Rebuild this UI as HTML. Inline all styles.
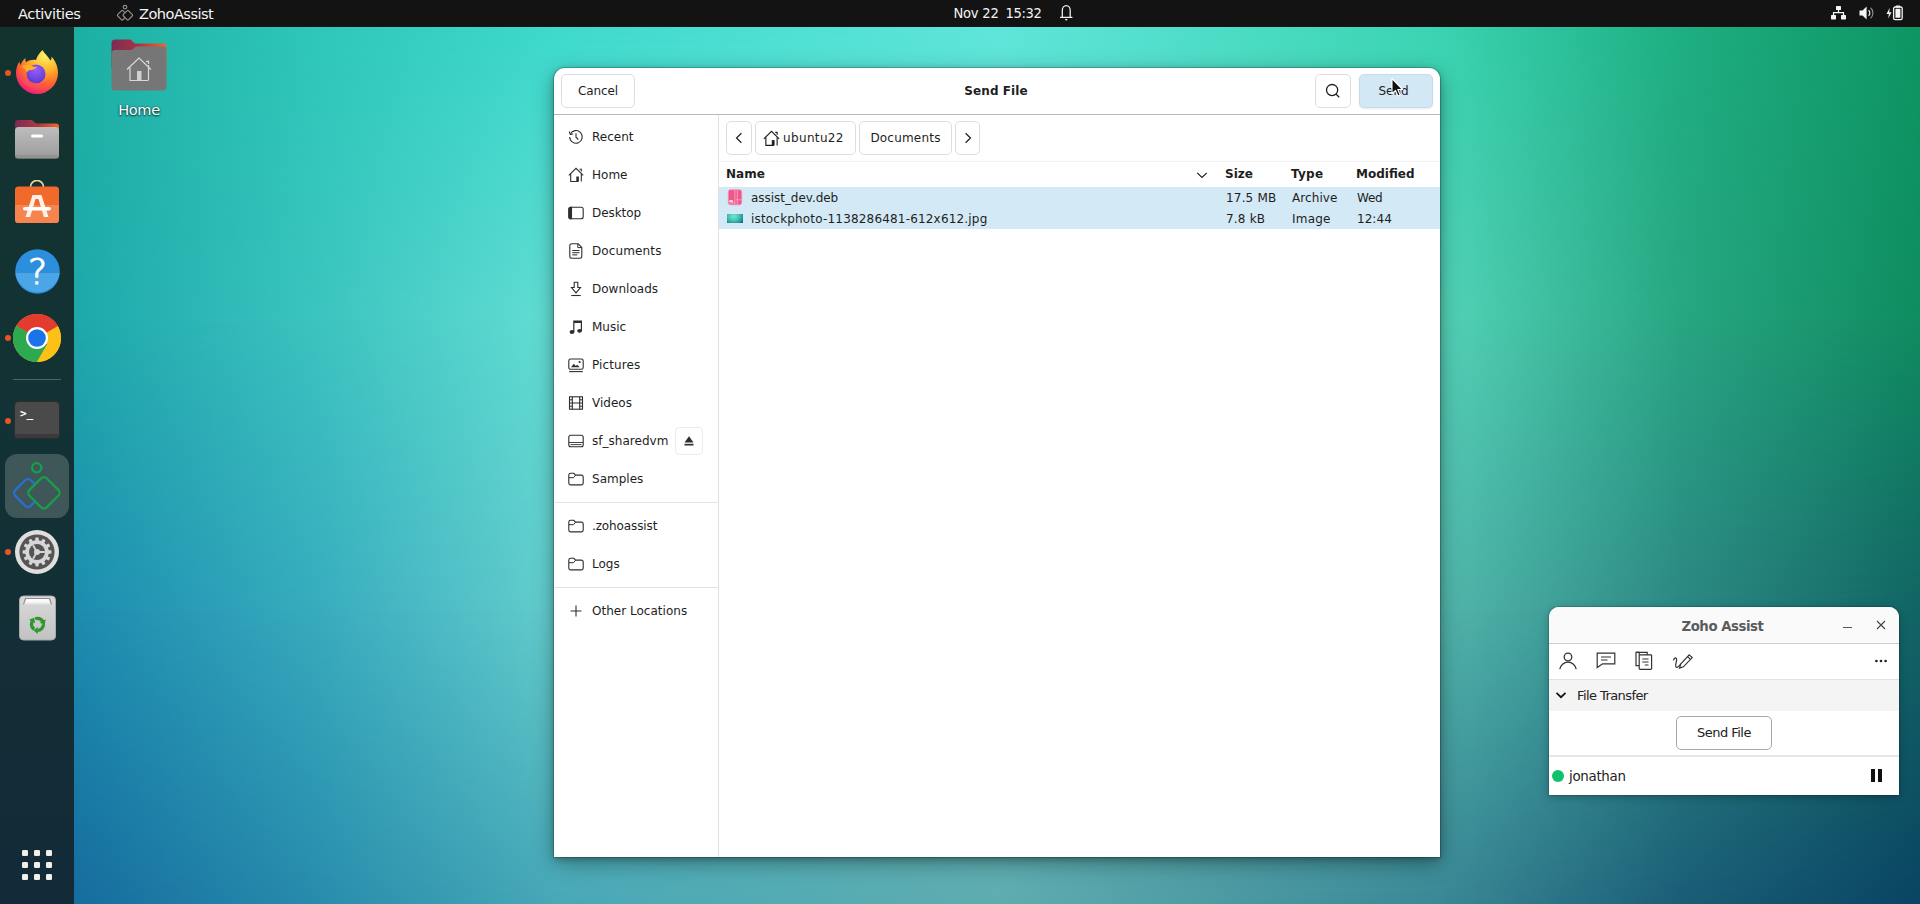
<!DOCTYPE html>
<html lang="en">
<head>
<meta charset="utf-8">
<title>Send File</title>
<style>
*{box-sizing:border-box;margin:0;padding:0}
html,body{width:1920px;height:904px;overflow:hidden;background:#1a9aa5}
body{position:relative;font-family:"DejaVu Sans","Liberation Sans",sans-serif;font-size:12px;color:#1e1e1e;-webkit-font-smoothing:antialiased}
.abs{position:absolute}
/* wallpaper */
#wall{position:absolute;left:0;top:0;width:1920px;height:904px;overflow:hidden}
#wall div{position:absolute;left:0;top:0;width:1920px;height:904px}
/* top bar */
#topbar{position:absolute;left:0;top:0;width:1920px;height:27px;background:#131313;color:#f4f4f4;font-size:14.6px;font-family:"DejaVu Sans","Liberation Sans",sans-serif}
#topbar span{position:absolute;top:0;line-height:27px;white-space:nowrap}
/* dock */
#dock{position:absolute;left:0;top:27px;width:74px;height:877px;background:linear-gradient(180deg,#13332f 0%,#133235 45%,#132a38 100%)}
.dot{position:absolute;width:6px;height:6px;border-radius:50%;background:#e95420}
/* dialog */
#dlg{position:absolute;left:554px;top:68px;width:886px;height:789px;background:#fff;border-radius:11px 11px 0 0;box-shadow:0 0 0 1px rgba(0,0,0,.18),0 6px 22px rgba(0,0,0,.35),0 2px 6px rgba(0,0,0,.25)}
#hdr{position:absolute;left:0;top:0;width:886px;height:47px;border-bottom:1px solid #b9b9b9}
.btn{position:absolute;border:1px solid #dedede;border-radius:5px;background:#fff;text-align:center;white-space:nowrap}
#side{position:absolute;left:0;top:47px;width:165px;height:742px;border-right:1px solid #e0e0e0;background:#fff}
.si{position:absolute;left:38px;height:20px;line-height:20px;white-space:nowrap;letter-spacing:.02px;margin-top:1px}
.ic{position:absolute;left:14px;width:16px;height:16px;margin-top:1px}
.sep{position:absolute;left:0;width:164px;height:1px;background:#e2e2e2}
#main{position:absolute;left:165px;top:47px;width:721px;height:742px}
.row{position:absolute;left:0;width:721px;height:21px;background:#d3e9f5}
.row span{position:absolute;top:1px;line-height:21px;white-space:nowrap}
.ch span{position:absolute;top:0;white-space:nowrap}
.ch{position:absolute;left:0;top:114px;width:721px;height:26px;font-weight:bold}
.ch span{line-height:26px}
/* widget */
#wd{position:absolute;left:1549px;top:607px;width:350px;height:188px;background:#fff;border-radius:10px 10px 0 0;overflow:hidden}
#wdwrap{position:absolute;left:1549px;top:607px;width:350px;height:188px;border-radius:10px 10px 0 0;box-shadow:0 0 0 1px rgba(0,0,0,.12),0 2px 10px rgba(0,0,0,.28)}
</style>
</head>
<body>
<!--WALL0-->
<div id="wall">
<div style="background:linear-gradient(90deg,rgb(28,176,163) 0.00%,rgb(28,176,163) 3.85%,rgb(46,200,186) 16.67%,rgb(62,218,205) 29.17%,rgb(95,230,218) 52.08%,rgb(58,212,178) 75.00%,rgb(30,175,130) 87.50%,rgb(14,150,100) 100.00%);"></div>
<div style="background:linear-gradient(90deg,rgb(30,168,170) 0.00%,rgb(30,168,170) 3.85%,rgb(60,196,192) 16.67%,rgb(100,222,212) 29.17%,rgb(100,220,205) 52.08%,rgb(84,210,184) 75.00%,rgb(40,166,130) 87.50%,rgb(15,140,96) 100.00%);-webkit-mask-image:linear-gradient(180deg,rgba(0,0,0,0) 27px,#000 320px);mask-image:linear-gradient(180deg,rgba(0,0,0,0) 27px,#000 320px);"></div>
<div style="background:linear-gradient(90deg,rgb(28,140,175) 0.00%,rgb(28,140,175) 3.85%,rgb(56,172,190) 16.67%,rgb(100,205,205) 29.17%,rgb(95,195,195) 52.08%,rgb(82,182,172) 75.00%,rgb(44,136,132) 87.50%,rgb(18,100,100) 100.00%);-webkit-mask-image:linear-gradient(180deg,rgba(0,0,0,0) 320px,#000 610px);mask-image:linear-gradient(180deg,rgba(0,0,0,0) 320px,#000 610px);"></div>
<div style="background:linear-gradient(90deg,rgb(22,108,158) 0.00%,rgb(22,108,158) 3.85%,rgb(40,140,172) 16.67%,rgb(72,168,182) 29.17%,rgb(95,172,175) 52.08%,rgb(58,135,150) 75.00%,rgb(26,93,118) 87.50%,rgb(10,68,98) 100.00%);-webkit-mask-image:linear-gradient(180deg,rgba(0,0,0,0) 610px,#000 904px);mask-image:linear-gradient(180deg,rgba(0,0,0,0) 610px,#000 904px);"></div>
</div>
<!--WALL1-->
<div id="topbar">
<span style="left:18px;letter-spacing:-.42px">Activities</span>
<svg class="abs" style="left:116px;top:4px" width="18" height="18" viewBox="0 0 18 18" fill="none" stroke="#8e8e8e" stroke-width="1.2"><circle cx="9" cy="3.100" r="1.800"/><rect x="2.500" y="7.500" width="7.400" height="7.400" rx="1.200" transform="rotate(45 6.200 11.200)"/><rect x="8.100" y="7.500" width="7.400" height="7.400" rx="1.200" transform="rotate(45 11.800 11.200)" fill="#131313"/></svg>
<span style="left:139px;letter-spacing:-.55px">ZohoAssist</span>
<span style="left:953.500px;top:-1px;font-family:'DejaVu Sans Condensed','DejaVu Sans','Liberation Sans',sans-serif;letter-spacing:-.25px">Nov 22</span><span style="left:1005.500px;top:-1px;font-family:'DejaVu Sans Condensed','DejaVu Sans','Liberation Sans',sans-serif;letter-spacing:-.35px">15:32</span>
<svg class="abs" style="left:1058px;top:4px" width="17" height="18" viewBox="0 0 17 18" fill="none" stroke="#f4f4f4" stroke-width="1.250"><path d="M2.100 13.400h12.300M4.300 13.200V6.300a3.950 4.800 0 0 1 7.900 0v6.900"/><path d="M6.700 15h3.100l-1.550 1.700z" fill="#f4f4f4" stroke="none"/></svg>
<!-- network -->
<svg class="abs" style="left:1830px;top:5px" width="17" height="16" viewBox="0 0 17 16" fill="#f4f4f4"><rect x="6" y="1" width="5" height="4" rx=".6"/><rect x="1" y="10" width="5" height="4.4" rx=".6"/><rect x="11" y="10" width="5" height="4.4" rx=".6"/><path d="M7.900 5h1.200v2h5v3h-1.200V8.200H4.100V10H2.900V7h5z"/></svg>
<!-- volume -->
<svg class="abs" style="left:1858px;top:4px" width="18" height="18" viewBox="0 0 18 18"><path d="M1.5 6.5h3L8.6 2.4v13.2L4.5 11.5h-3z" fill="#f4f4f4"/><path d="M10.6 6.3a3.6 3.6 0 0 1 0 5.4" fill="none" stroke="#f4f4f4" stroke-width="1.2"/><path d="M12.6 3.8a7 7 0 0 1 0 10.4" fill="none" stroke="#8a8a8a" stroke-width="1.2"/></svg>
<!-- battery -->
<svg class="abs" style="left:1886px;top:4px" width="18" height="18" viewBox="0 0 18 18"><path d="M3.700 3.800L.500 9.900h2.400L2.200 14.600 5.600 8.200H3.200z" fill="#f4f4f4"/><rect x="7.6" y="3" width="8.6" height="12.6" rx="1.6" fill="none" stroke="#f4f4f4" stroke-width="1.3"/><rect x="9.6" y="1.4" width="4.6" height="2" rx=".6" fill="#f4f4f4"/><rect x="9.4" y="4.8" width="5" height="9" rx=".6" fill="#f4f4f4"/></svg>
</div>
<div id="dock">
<!-- running dots (dock coords: y = page y - 27) -->
<div class="dot" style="left:5px;top:43px"></div>
<div class="dot" style="left:5px;top:308px"></div>
<div class="dot" style="left:5px;top:391px"></div>
<div class="dot" style="left:5px;top:452px"></div>
<div class="dot" style="left:5px;top:461px"></div>
<div class="dot" style="left:5px;top:522px"></div>
<!-- firefox -->
<svg class="abs" style="left:15px;top:22px" width="44" height="46" viewBox="0 0 44 46">
<defs><radialGradient id="ffa" cx=".7" cy=".1" r="1.1"><stop offset="0" stop-color="#fff36b"/><stop offset=".3" stop-color="#ffbd2e"/><stop offset=".6" stop-color="#ff6a2a"/><stop offset=".85" stop-color="#f0207a"/><stop offset="1" stop-color="#c7159a"/></radialGradient>
<radialGradient id="ffb" cx=".5" cy=".3" r=".7"><stop offset="0" stop-color="#9a5cff"/><stop offset="1" stop-color="#5a3ad0"/></radialGradient></defs>
<path d="M27.5 1c1.5 3.5 6 6.5 8 10.5 1-1 1.2-2.6 1-4 4 4.500 6.500 10 6.500 16.500A21 21 0 0 1 22 45 21 21 0 0 1 1 24c0-5 1.500-8.500 3.500-11.500 0 1.500.4 2.800 1 3.800 1-3 2.500-5.500 5-7.300-.3 1.500 0 3 .6 4.200C14 11 18 10.500 21 11c1-3.500 3.500-7.500 6.500-10z" fill="url(#ffa)"/>
<circle cx="21" cy="25" r="9.500" fill="url(#ffb)"/>
<path d="M7 18c3-2.500 7-2.500 10-1 2 1 3.500 1.200 5.500.6-1.500 2.400-4 3.400-6.500 3.400-2 0-3 .8-4 2.200-.5-2-2.400-4-5-5.200z" fill="#ffb02e"/>
<path d="M4.500 27c2 7 8 12 16 12 7 0 12.500-4 15-10-2.500 3-6.500 5-11 5-9 0-15-3.500-20-7z" fill="#ff4f5e" opacity=".55"/>
</svg>
<!-- files -->
<svg class="abs" style="left:15px;top:92px" width="44" height="40" viewBox="0 0 44 40">
<defs><linearGradient id="fta" x1="0" x2="1"><stop offset="0" stop-color="#7b2a55"/><stop offset=".55" stop-color="#b33a3a"/><stop offset="1" stop-color="#f0692a"/></linearGradient><linearGradient id="ftb" x1="0" x2="0" y1="0" y2="1"><stop offset="0" stop-color="#bdbdbd"/><stop offset="1" stop-color="#9c9c9c"/></linearGradient></defs>
<path d="M0 4a3 3 0 0 1 3-3h14l4 3.500h20a3 3 0 0 1 3 3V20H0z" fill="url(#fta)"/>
<rect x="0" y="8" width="44" height="31.500" rx="3.500" fill="url(#ftb)"/>
<rect x="0" y="36" width="44" height="3.500" rx="1.700" fill="#8a8a8a" opacity=".6"/>
<rect x="16" y="15.500" width="12" height="3" rx="1.500" fill="#fff"/>
</svg>
<!-- software -->
<svg class="abs" style="left:15px;top:153px" width="44" height="44" viewBox="0 0 44 44">
<path d="M15.500 8.500V7a6.500 6.500 0 0 1 13 0v1.500" fill="none" stroke="#f7d9a0" stroke-width="1.600"/>
<rect x="0" y="6.500" width="44" height="36.500" rx="3.500" fill="#f26a2b"/>
<path d="M0 25h44v14.500a3.500 3.500 0 0 1-3.500 3.500h-37A3.500 3.500 0 0 1 0 39.500z" fill="#f5844f"/>
<path d="M17.500 15h9l7 22h-4.600l-5.400-18h-3l-5.400 18h-4.600z" fill="#fdf1ea"/>
<rect x="8" y="27" width="28" height="3.600" rx="1.800" fill="#fff"/>
</svg>
<!-- help -->
<svg class="abs" style="left:14.500px;top:221.500px" width="45" height="45" viewBox="0 0 45 45">
<circle cx="22.500" cy="22.500" r="22.300" fill="#2b8fdd"/>
<path d="M.4 24a22.300 22.300 0 0 0 44.200 0z" fill="#4aa6e6"/>
<text x="22.500" y="35" text-anchor="middle" font-family="DejaVu Sans Light,DejaVu Sans,sans-serif" font-weight="200" font-size="36" fill="#fff" stroke="#fff" stroke-width="1.200" stroke-linejoin="round">?</text>
</svg>
<!-- chrome -->
<svg class="abs" style="left:13px;top:286.500px" width="48" height="48" viewBox="0 0 48 48">
<circle cx="24" cy="24" r="24" fill="#fbc116"/>
<path d="M24 24L3.220 12A24 24 0 0 1 44.780 12z" fill="#e33b2e"/>
<path d="M24 0A24 24 0 0 1 44.780 12H24z" fill="#e33b2e"/>
<path d="M3.220 12A24 24 0 0 0 24 48L34.400 30 24 24z" fill="#2da94f"/>
<path d="M3.220 12L13.600 30 24 24z" fill="#2da94f"/>
<path d="M24 48L34.400 30l-10.400-6 20.780-12A24 24 0 0 1 24 48z" fill="#fbc116"/>
<path d="M24 12h20.780L34.400 18z" fill="#e33b2e"/>
<circle cx="24" cy="24" r="11" fill="#fff"/>
<circle cx="24" cy="24" r="8.800" fill="#1a73e8"/>
</svg>
<!-- separator -->
<div class="abs" style="left:13px;top:351.500px;width:48px;height:1px;background:#4d6366"></div>
<!-- terminal -->
<svg class="abs" style="left:14px;top:374px" width="46" height="38" viewBox="0 0 46 38">
<rect x=".5" y=".5" width="45" height="37" rx="4" fill="#4a4a4a" stroke="#2c2c2c"/>
<rect x="1" y="33" width="44" height="4" rx="2" fill="#3a3a3a"/>
<text x="6" y="15.500" font-family="DejaVu Sans Mono,Liberation Mono,monospace" font-size="11" font-weight="bold" fill="#fff">&gt;_</text>
</svg>
<!-- zoho active -->
<div class="abs" style="left:5px;top:427px;width:64px;height:64px;border-radius:12px;background:#3f5759"></div>
<svg class="abs" style="left:11px;top:434px" width="52" height="52" viewBox="0 0 52 52" fill="none" stroke-width="2.300">
<rect x="6" y="21" width="22" height="22" rx="4" transform="rotate(45 17 32)" stroke="#2a6fd0"/>
<rect x="20.650" y="19.550" width="24.500" height="24.500" rx="4.200" transform="rotate(45 32.900 31.800)" stroke="#16a04a" fill="#3f5759"/>
<circle cx="25.700" cy="6.800" r="4.600" stroke="#16a04a"/>
</svg>
<!-- settings -->
<svg class="abs" style="left:15px;top:503px" width="44" height="44" viewBox="0 0 44 44">
<circle cx="22" cy="22" r="22" fill="#dfdfdf"/>
<circle cx="22" cy="22" r="17.600" fill="#555"/>
<g fill="#d6d6d6"><circle cx="22" cy="22" r="11.800"/>
<g id="tg"><rect x="20.300" y="7.600" width="3.400" height="4" rx=".800"/><rect x="20.300" y="32.400" width="3.400" height="4" rx=".800"/></g>
<use href="#tg" transform="rotate(30 22 22)"/><use href="#tg" transform="rotate(60 22 22)"/><use href="#tg" transform="rotate(90 22 22)"/><use href="#tg" transform="rotate(120 22 22)"/><use href="#tg" transform="rotate(150 22 22)"/></g>
<circle cx="22" cy="22" r="8" fill="#555"/>
<g stroke="#d6d6d6" stroke-width="1.800"><path d="M22 22L29.800 22M22 22L18.100 15.200M22 22L18.100 28.800"/></g>
<circle cx="22" cy="22" r="3" fill="#d6d6d6"/>
</svg>
<!-- trash -->
<svg class="abs" style="left:18.500px;top:568px" width="37" height="46" viewBox="0 0 37 46">
<defs><linearGradient id="trg" x1="0" x2="0" y1="0" y2="1"><stop offset="0" stop-color="#d9d9d9"/><stop offset="1" stop-color="#c2c2c2"/></linearGradient></defs>
<rect x=".5" y="1" width="36" height="44" rx="4" fill="url(#trg)" stroke="#a9a9a9"/>
<path d="M4 9.500l2-6.500h25l2 6.500z" fill="#8f8f8f"/>
<path d="M5.500 8.500l1.600-4.500h22.800l1.600 4.500z" fill="#fafafa"/>
<path d="M5 9.800l1-2.300h25l1 2.300z" fill="#e8e8e8"/>
<g transform="translate(18.500 29.300)"><circle r="6" fill="none" stroke="#2f962f" stroke-width="3.300" stroke-dasharray="9.200 3.366"/><g fill="#2f962f"><path d="M.3 2.600L.3 9.600L-3.900 6.100z"/><path d="M.3 2.600L.3 9.600L-3.900 6.100z" transform="rotate(120)"/><path d="M.3 2.600L.3 9.600L-3.900 6.100z" transform="rotate(240)"/></g></g>
</svg>
<!-- app grid -->
<svg class="abs" style="left:21px;top:822px" width="32" height="32" viewBox="0 0 32 32" fill="#f3efe9"><g id="gr"><rect x="1" y="1" width="6" height="6" rx="1.300"/><rect x="13" y="1" width="6" height="6" rx="1.300"/><rect x="25" y="1" width="6" height="6" rx="1.300"/></g><use href="#gr" y="12"/><use href="#gr" y="24"/></svg>
</div>
<!-- desktop home icon -->
<svg class="abs" style="left:110px;top:37.500px" width="58" height="55" viewBox="0 0 58 55">
<defs><linearGradient id="hfa" x1="0" x2="1"><stop offset="0" stop-color="#7c2b57"/><stop offset=".5" stop-color="#a8353f"/><stop offset="1" stop-color="#f0682a"/></linearGradient></defs>
<path d="M1.500 5a3.500 3.500 0 0 1 3.500-3.500h15.500l4.500 4h28a3.500 3.500 0 0 1 3.500 3.500V30H1.500z" fill="url(#hfa)"/>
<path d="M1.500 15.500a3.500 3.500 0 0 1 3.500-3.500h16.500l4.500-3.500h27a3.500 3.500 0 0 1 3.500 3.500v37a3.500 3.500 0 0 1-3.500 3.500H5a3.500 3.500 0 0 1-3.500-3.500z" fill="#767676"/>
<path d="M17 31.500L29 20l12 11.500M20 29.500V42.500h18M38.500 27v15.500M36 23.500l2.500-.3v2.800" fill="none" stroke="#d9d9d9" stroke-width="1.200"/>
<rect x="27" y="33" width="4.500" height="9.500" fill="#d0d0d0"/>
</svg>
<div class="abs" style="left:99px;top:100px;width:80px;text-align:center;color:#fff;font-size:14.600px;letter-spacing:-.4px;line-height:20px;text-shadow:0 1px 2px rgba(0,0,0,.75),0 0 2px rgba(0,0,0,.5)">Home</div>
<!-- file chooser dialog -->
<div id="dlg">
<div id="hdr">
<div class="btn" style="left:7px;top:6px;width:74px;height:34px;line-height:32px;letter-spacing:-.15px">Cancel</div>
<div class="abs" style="left:0;top:7px;width:884px;text-align:center;font-weight:bold;line-height:32px;letter-spacing:.08px">Send File</div>
<div class="btn" style="left:761px;top:6px;width:36px;height:34px"><svg class="abs" style="left:9px;top:8px" width="16" height="16" viewBox="0 0 16 16" fill="none" stroke="#1e1e1e" stroke-width="1.300"><circle cx="7.100" cy="7.100" r="5.600"/><path d="M11.200 11.200l3 3"/></svg></div>
<div class="btn" style="left:805px;top:6px;width:74px;height:34px;line-height:32px;background:#d2e8f5;border-color:#c3dbea;box-shadow:0 1px 2px rgba(0,0,0,.08);padding-right:5px">Send</div>
</div>
<div id="side">
<!-- Recent -->
<svg class="ic" style="top:13px" viewBox="0 0 16 16" fill="none" stroke="#2e2e2e" stroke-width="1.100"><path d="M2.300 5.200A6.300 6.300 0 1 1 1.700 8"/><path d="M1.300 2.400l.8 3.200 3.100-.7" stroke-width="1"/><path d="M8 4.300V8.200l2.300 2.300"/></svg>
<div class="si" style="top:11px">Recent</div>
<!-- Home -->
<svg class="ic" style="top:51px" viewBox="0 0 16 16" fill="none" stroke="#2e2e2e" stroke-width="1.100"><path d="M.8 8.300L8 1.300l7.200 7M2.700 6.800v7.700h7.600"/><path d="M13.300 6.800v7.700M11.500 2.200h1.800v2.300"/><rect x="8.300" y="9.500" width="2.600" height="5" fill="#2e2e2e" stroke="none"/></svg>
<div class="si" style="top:49px">Home</div>
<!-- Desktop -->
<svg class="ic" style="top:89px" viewBox="0 0 16 16" fill="none" stroke="#2e2e2e" stroke-width="1.100"><rect x=".8" y="2.300" width="14.400" height="11.400" rx="2"/><path d="M1 4a1.700 1.700 0 0 1 1.800-1.700H3.500v11.400H2.800A1.700 1.700 0 0 1 1 12z" fill="#2e2e2e"/></svg>
<div class="si" style="top:87px;letter-spacing:-.08px">Desktop</div>
<!-- Documents -->
<svg class="ic" style="top:127px" viewBox="0 0 16 16" fill="none" stroke="#2e2e2e" stroke-width="1.100"><path d="M3.500.800h6.700l3.600 3.600v9.100a1.700 1.700 0 0 1-1.700 1.700H3.500a1.700 1.700 0 0 1-1.700-1.700v-11A1.700 1.700 0 0 1 3.500.800z"/><path d="M9.800 1v3.600h3.800" stroke-width="1"/><path d="M4.300 7.500h7.200M4.300 9.700h7.200M4.300 11.900h5" stroke-width="1"/></svg>
<div class="si" style="top:125px;letter-spacing:.12px">Documents</div>
<!-- Downloads -->
<svg class="ic" style="top:165px" viewBox="0 0 16 16" fill="none" stroke="#2e2e2e" stroke-width="1.100"><path d="M6.200 1.300h3.600v5.200h2.700L8 11.800 3.500 6.500h2.700z"/><path d="M3.300 14.500h9.400"/></svg>
<div class="si" style="top:163px">Downloads</div>
<!-- Music -->
<svg class="ic" style="top:203px" viewBox="0 0 16 16" fill="#2e2e2e"><path d="M5.200 1.500h8.800v10.300h-1.200V4H6.400v9H5.200z"/><ellipse cx="4" cy="13" rx="2.400" ry="1.900"/><ellipse cx="11.600" cy="11.800" rx="2.400" ry="1.900"/></svg>
<div class="si" style="top:201px">Music</div>
<!-- Pictures -->
<svg class="ic" style="top:241px" viewBox="0 0 16 16" fill="none" stroke="#2e2e2e" stroke-width="1.100"><rect x=".800" y="2" width="14.400" height="10.300" rx="1.800"/><path d="M1.200 14.600h13.600"/><path d="M3 10.300l2.800-3.500 2 2.200 1.400-1.300 2.600 2.600z" fill="#2e2e2e" stroke="none"/><circle cx="11.600" cy="5" r="1.100" fill="#2e2e2e" stroke="none"/></svg>
<div class="si" style="top:239px;letter-spacing:.12px">Pictures</div>
<!-- Videos -->
<svg class="ic" style="top:279px" viewBox="0 0 16 16" fill="none" stroke="#2e2e2e" stroke-width="1.100"><rect x="1.500" y="1.800" width="13" height="12.400"/><path d="M4.300 1.800v12.400M11.700 1.800v12.400M4.300 8h7.400"/><path d="M1.500 4.800h2.800M1.500 8h2.800M1.500 11.200h2.800M11.700 4.800h2.800M11.700 8h2.800M11.700 11.200h2.800" stroke-width="1"/></svg>
<div class="si" style="top:277px">Videos</div>
<!-- sf_sharedvm -->
<svg class="ic" style="top:317px" viewBox="0 0 16 16" fill="none" stroke="#2e2e2e" stroke-width="1.100"><rect x=".800" y="2.300" width="14.400" height="11.400" rx="2"/><path d="M1 9.500h14M2.500 11.600h11" stroke-width=".900"/></svg>
<div class="si" style="top:315px">sf_sharedvm</div>
<div class="btn" style="left:121px;top:312px;width:28px;height:28px;border-color:#ececec;border-radius:4px"><svg class="abs" style="left:7px;top:7px" width="12" height="12" viewBox="0 0 12 12" fill="#2e2e2e"><path d="M6 1.300l4.500 6.200h-9z"/><rect x="1.500" y="8.800" width="9" height="1.700"/></svg></div>
<!-- Samples -->
<svg class="ic" style="top:355px" viewBox="0 0 16 16" fill="none" stroke="#2e2e2e" stroke-width="1.100"><path d="M.800 4.200A1.900 1.900 0 0 1 2.700 2.300h3.200l1.600 1.800h5.800a1.900 1.900 0 0 1 1.900 1.900v6a1.900 1.900 0 0 1-1.900 1.900H2.700a1.900 1.900 0 0 1-1.900-1.900z"/><path d="M1 6.700h4.500l2-2.400" stroke-width="1"/></svg>
<div class="si" style="top:353px">Samples</div>
<div class="sep" style="top:387px"></div>
<!-- .zohoassist -->
<svg class="ic" style="top:402px" viewBox="0 0 16 16" fill="none" stroke="#2e2e2e" stroke-width="1.100"><path d="M.800 4.200A1.900 1.900 0 0 1 2.700 2.300h3.200l1.600 1.800h5.800a1.900 1.900 0 0 1 1.900 1.900v6a1.900 1.900 0 0 1-1.900 1.900H2.700a1.900 1.900 0 0 1-1.900-1.900z"/><path d="M1 6.700h4.500l2-2.400" stroke-width="1"/></svg>
<div class="si" style="top:400px;letter-spacing:-.12px">.zohoassist</div>
<!-- Logs -->
<svg class="ic" style="top:440px" viewBox="0 0 16 16" fill="none" stroke="#2e2e2e" stroke-width="1.100"><path d="M.800 4.200A1.900 1.900 0 0 1 2.700 2.300h3.200l1.600 1.800h5.800a1.900 1.900 0 0 1 1.900 1.900v6a1.900 1.900 0 0 1-1.900 1.900H2.700a1.900 1.900 0 0 1-1.900-1.900z"/><path d="M1 6.700h4.500l2-2.400" stroke-width="1"/></svg>
<div class="si" style="top:438px">Logs</div>
<div class="sep" style="top:472px"></div>
<!-- Other Locations -->
<svg class="ic" style="top:487px" viewBox="0 0 16 16" fill="none" stroke="#2e2e2e" stroke-width="1.100"><path d="M8 2.500v11M2.500 8h11"/></svg>
<div class="si" style="top:485px">Other Locations</div>
</div>
<div id="main">
<!-- path bar -->
<div class="btn" style="left:7px;top:6px;width:26px;height:34px"><svg class="abs" style="left:6px;top:10px" width="12" height="12" viewBox="0 0 12 12" fill="none" stroke="#1e1e1e" stroke-width="1.200"><path d="M8.400 1.200L3.500 6l4.900 4.800"/></svg></div>
<div class="btn" style="left:36px;top:6px;width:101px;height:34px;line-height:32px;text-align:left;padding-left:27px;letter-spacing:.35px"><svg class="abs" style="left:6.500px;top:7.500px" width="17" height="17" viewBox="0 0 16 16" fill="none" stroke="#1e1e1e" stroke-width="1.050"><path d="M.8 8.300L8 1.300l7.200 7M2.700 6.800v7.700h7.600"/><path d="M13.300 6.800v7.700M11.500 2.200h1.800v2.300"/><rect x="8.300" y="9.500" width="2.600" height="5" fill="#1e1e1e" stroke="none"/></svg>ubuntu22</div>
<div class="btn" style="left:140px;top:6px;width:93px;height:34px;line-height:32px;letter-spacing:.2px">Documents</div>
<div class="btn" style="left:236px;top:6px;width:25px;height:34px"><svg class="abs" style="left:6px;top:10px" width="12" height="12" viewBox="0 0 12 12" fill="none" stroke="#1e1e1e" stroke-width="1.200"><path d="M3.600 1.200L8.500 6 3.600 10.800"/></svg></div>
<div class="abs" style="left:0;top:46px;width:721px;height:1px;background:#f2f2f2"></div>
<!-- column header -->
<div class="ch" style="top:46px">
<span style="left:7px">Name</span>
<svg class="abs" style="left:477px;top:8px" width="12" height="12" viewBox="0 0 12 12" fill="none" stroke="#1e1e1e" stroke-width="1.200"><path d="M1.200 3.900l4.800 4.500 4.800-4.500"/></svg>
<span style="left:506px">Size</span>
<span style="left:572px;letter-spacing:.25px">Type</span>
<span style="left:637px">Modified</span>
</div>
<!-- rows -->
<div class="row" style="top:72px">
<svg class="abs" style="left:8px;top:2px" width="16" height="17" viewBox="0 0 16 17"><rect x="1.300" y=".800" width="13.400" height="15" rx="2.200" fill="#f0568a" stroke="#f58fb0" stroke-width=".800"/><path d="M7.900 1.200v14.200M10.300 1.200v14.200" stroke="#f8a9c2" stroke-width=".900"/><path d="M9 10.800h5.300" stroke="#f9b3c9" stroke-width=".800"/><rect x="2.300" y="11.300" width="3.600" height="1.600" fill="#fff"/><rect x="2.300" y="13.400" width="5.600" height="1" fill="#f9b3c9"/></svg>
<span style="left:32px;letter-spacing:-.04px">assist_dev.deb</span>
<span style="left:507px;letter-spacing:.18px">17.5 MB</span>
<span style="left:573px;letter-spacing:.08px">Archive</span>
<span style="left:638px;letter-spacing:-.25px">Wed</span>
</div>
<div class="row" style="top:93px">
<div class="abs" style="left:8px;top:6px;width:16px;height:9px;background:radial-gradient(ellipse 75% 110% at 42% 25%,#7ae3d2 0%,#45c4b3 45%,#228a94 80%,#16607c 100%)"></div>
<span style="left:32px;letter-spacing:.18px">istockphoto-1138286481-612x612.jpg</span>
<span style="left:507px;letter-spacing:.2px">7.8 kB</span>
<span style="left:573px;letter-spacing:.2px">Image</span>
<span style="left:638px;letter-spacing:.05px">12:44</span>
</div>
</div>
</div>
<!--WIDGET-->
<!-- zoho assist widget -->
<div id="wdwrap"></div>
<div id="wd">
<div class="abs" style="left:0;top:0;width:350px;height:37px;background:#fafafa;border-bottom:1px solid #cdcdcd"></div>
<div class="abs" style="left:0;top:0;width:350px;line-height:39px;text-align:center;font-weight:bold;font-size:13.300px;letter-spacing:-.45px;color:#5c5c5c;padding-right:3px">Zoho Assist</div>
<div class="abs" style="left:293.500px;top:19.500px;width:9px;height:1px;background:#555"></div>
<svg class="abs" style="left:327px;top:13px" width="10" height="10" viewBox="0 0 10 10" stroke="#444" stroke-width="1.100" fill="none"><path d="M1 1l8 8M9 1L1 9"/></svg>
<!-- toolbar icons -->
<svg class="abs" style="left:9px;top:44px" width="20" height="20" viewBox="0 0 20 20" fill="none" stroke="#333" stroke-width="1.300"><circle cx="10" cy="6" r="3.800"/><path d="M1.800 18.200a8.300 8.300 0 0 1 16.400 0"/></svg>
<svg class="abs" style="left:47px;top:45px" width="20" height="18" viewBox="0 0 20 18" fill="none" stroke="#333" stroke-width="1.200"><path d="M1.200 1.200h17.600v10.600H6.600L1.200 15.600z"/><path d="M5 5h10M5 8h6.500" stroke-width="1.100"/></svg>
<svg class="abs" style="left:86px;top:44px" width="18" height="20" viewBox="0 0 18 20" fill="none" stroke="#333" stroke-width="1.200"><path d="M4.200 3.800V1.400H1v13.200h3"/><rect x="4.200" y="3.800" width="12.400" height="14.600" rx=".800"/><path d="M7.300 8h6.200M7.300 11h6.200M9.800 14h3.700" stroke-width="1.100"/><path d="M1 1.400h11.200v2.400" /></svg>
<svg class="abs" style="left:123px;top:44px" width="22" height="20" viewBox="0 0 22 20" fill="none" stroke="#333" stroke-width="1.200"><path d="M1.500 9.500c.500-2.500 2.300-3.300 3-1.800.900 2-2.200 7.500-.300 8.500 1.300.600 3.300-1.600 4.600-3.400"/><path d="M8.600 13.200l8.600-9.400 3 2.800-8.800 9.200-3.800 1.200z"/><path d="M15.500 5.600l3 2.800"/></svg>
<svg class="abs" style="left:325.500px;top:52px" width="12" height="4" viewBox="0 0 12 4" fill="#222"><circle cx="1.400" cy="2" r="1.350"/><circle cx="6" cy="2" r="1.350"/><circle cx="10.600" cy="2" r="1.350"/></svg>
<!-- file transfer -->
<div class="abs" style="left:0;top:72px;width:350px;height:32px;background:#f4f4f4;border-top:1px solid #e3e3e3"></div>
<svg class="abs" style="left:6px;top:82px" width="12" height="12" viewBox="0 0 12 12" fill="none" stroke="#111" stroke-width="1.700"><path d="M1.500 3.800L6 8.200l4.500-4.400"/></svg>
<div class="abs" style="left:28px;top:74px;line-height:30px;font-size:13px;letter-spacing:-.58px;color:#222">File Transfer</div>
<div class="btn" style="left:127px;top:109px;width:96px;height:34px;line-height:32px;border-color:#a9a9a9;font-size:13px;letter-spacing:-.54px;color:#222">Send File</div>
<div class="abs" style="left:0;top:148px;width:350px;height:2px;background:#e6e6e6"></div>
<div class="abs" style="left:2.500px;top:163px;width:12px;height:12px;border-radius:50%;background:#0fc06c"></div>
<div class="abs" style="left:20px;top:154.700px;line-height:30px;font-size:13.400px;letter-spacing:-.3px;color:#222">jonathan</div>
<div class="abs" style="left:322px;top:162px;width:4px;height:13px;background:#111"></div>
<div class="abs" style="left:329px;top:162px;width:4px;height:13px;background:#111"></div>
</div>
<!-- mouse cursor -->
<svg class="abs" style="left:1390.300px;top:76.800px" width="16" height="22" viewBox="0 0 16 22"><path d="M2 1.500v15.200l3.500-3.300 2.400 5.600 2.300-1-2.400-5.500h4.800z" fill="#111" stroke="#fff" stroke-width="1.100" stroke-linejoin="round"/></svg>
</body>
</html>
